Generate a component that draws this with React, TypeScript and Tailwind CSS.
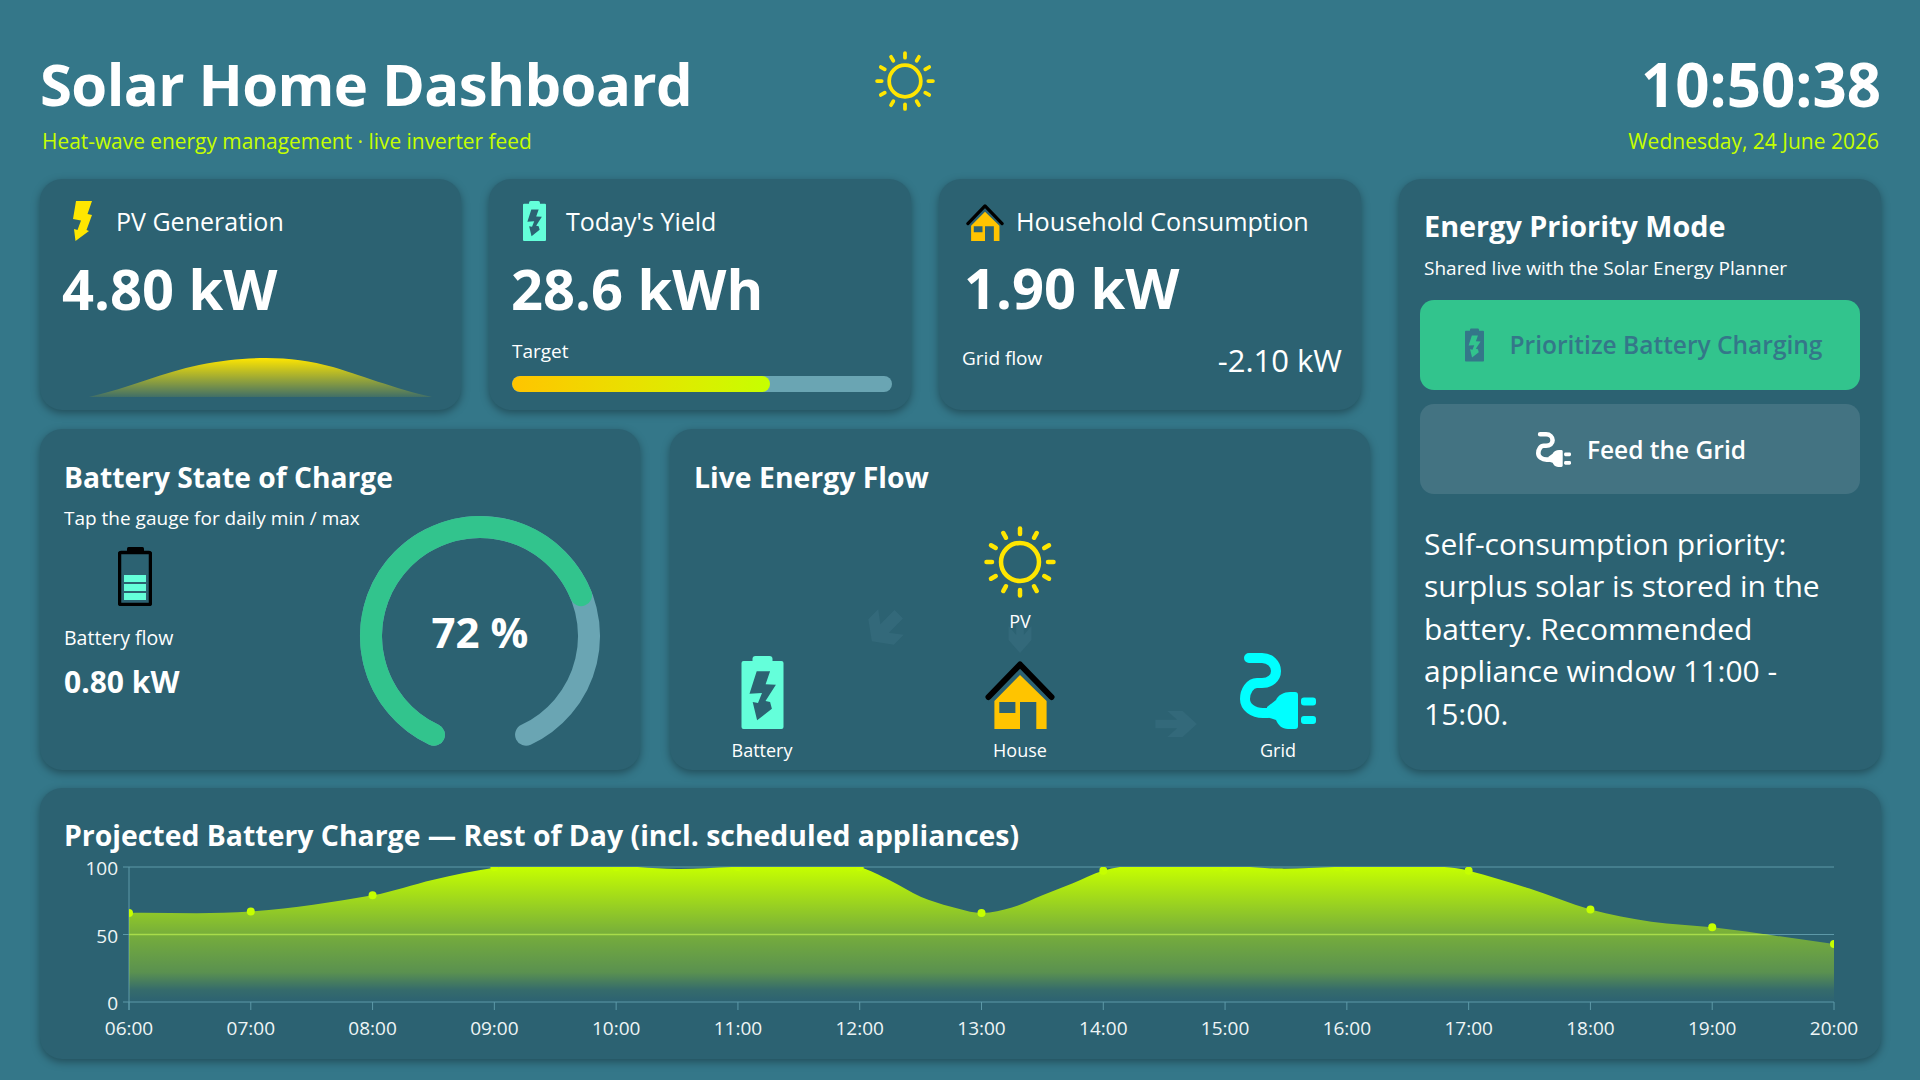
import React from "react";

const hours = Array.from({ length: 15 }, (_, i) => 6 + i);
const dots = [66, 67, 79, 100, 100, 100, 100, 66, 97.3, 100, 100, 97.3, 68.5, 55.3, 43];
// Extra knots keep the plateau dips and the overshoot of the smoothed line.
const knots: [number, number][] = [
  [6, 66], [7, 67], [8, 79], [8.5, 90.6], [9, 99.5], [9.5, 103], [10, 101], [10.5, 98.5], [10.95, 100],
  [11.4, 101], [11.75, 100.6], [12, 99.8], [12.25, 90], [12.5, 78], [12.75, 70.6], [13, 66], [13.25, 70], [13.5, 79],
  [13.75, 88], [14, 97.3], [14.25, 101], [15, 101], [15.45, 98.8], [15.9, 100], [16.4, 101], [16.8, 100], [17, 97.3],
  [17.5, 84], [18, 68.5], [18.5, 59.5], [19, 55.3], [20, 43],
];

const X0 = 89;
const X1 = 1794;
const Y0 = 149;
const Y100 = 14;
const px = (h: number) => X0 + ((h - 6) * (X1 - X0)) / 14;
const py = (v: number) => Y0 - (v * (Y0 - Y100)) / 100;

function linePath() {
  const slope = (i: number) => {
    const a = knots[Math.max(0, i - 1)];
    const b = knots[Math.min(knots.length - 1, i + 1)];
    return (b[1] - a[1]) / (b[0] - a[0]);
  };
  let d = `M${px(knots[0][0])} ${py(knots[0][1])}`;
  for (let i = 0; i < knots.length - 1; i++) {
    const [h0, v0] = knots[i];
    const [h1, v1] = knots[i + 1];
    const dt = (h1 - h0) / 3;
    d += ` C${px(h0 + dt)} ${py(v0 + slope(i) * dt)} ${px(h1 - dt)} ${py(v1 - slope(i + 1) * dt)} ${px(h1)} ${py(v1)}`;
  }
  return d;
}

const areaPath = `${linePath()} L${X1} ${Y0} L${X0} ${Y0} Z`;

function Sun({ size, color = "#ffe600" }: { size: number; color?: string }) {
  return (
    <svg width={size} height={size} viewBox="0 0 72 72" className="block">
      <circle cx="36" cy="36" r="19" fill="none" stroke={color} strokeWidth="4.5" />
      {Array.from({ length: 12 }, (_, i) => (
        <line
          key={i}
          x1="36"
          y1="2.5"
          x2="36"
          y2="8"
          stroke={color}
          strokeWidth="4.5"
          strokeLinecap="round"
          transform={`rotate(${i * 30} 36 36)`}
        />
      ))}
    </svg>
  );
}

function Bolt() {
  return (
    <svg width="21" height="40" viewBox="0 0 21 40" className="block">
      <path d="M3 0H19L14.5 13L19 14L13.5 29L16 30L2.5 40L1 28L4.5 29L8 19.5L0 18Z" fill="#ffe600" />
    </svg>
  );
}

function ChargeBattery({ width, height, color }: { width: number; height: number; color: string }) {
  return (
    <svg width={width} height={height} viewBox="0 0 42 73" className="block">
      <rect x="11" y="0" width="20" height="8" rx="3" fill={color} />
      <path
        fillRule="evenodd"
        fill={color}
        d="M2 5H40Q42 5 42 7V71Q42 73 40 73H2Q0 73 0 71V7Q0 5 2 5ZM15.2 15.3L8 37.7L20.5 37L16.5 47L11.2 46L15.6 64.3L30.4 52.7L28.6 46L24 45L34.4 28.7L24.1 28.3L28.6 15.3Z"
      />
    </svg>
  );
}

function House({ width, height }: { width: number; height: number }) {
  return (
    <svg width={width} height={height} viewBox="0 0 70 68" className="block">
      <path
        fillRule="evenodd"
        fill="#ffc400"
        d="M35 14L61.6 40V68H51.3V41H35V68H9.4V40ZM14.3 41V52H30.4V41Z"
      />
      <path d="M3.5 36L35 3.5L66.5 36" fill="none" stroke="#000" strokeWidth="6" strokeLinecap="round" strokeLinejoin="round" />
    </svg>
  );
}

function Plug({ size, color }: { size: number; color: string }) {
  return (
    <svg width={size} height={size} viewBox="0 0 76 76" className="block">
      <path
        d="M9 5H22C30 5 36 11 36 18C36 25 30 30 22 30H17C10 30 5 38 5 46C5 54 13 60 23 60H28"
        fill="none"
        stroke={color}
        strokeWidth="10"
        strokeLinecap="round"
      />
      <path d="M27 54L36 47C38 42 44 39 50 39H55Q58 39 58 42V73Q58 76 55 76H48C42 76 38 72 36 67L27 64Z" fill={color} />
      <rect x="61" y="44.5" width="15" height="8" rx="3" fill={color} />
      <rect x="61" y="63" width="15" height="8" rx="3" fill={color} />
    </svg>
  );
}

function LevelBattery() {
  return (
    <svg width="34" height="59" viewBox="0 0 34 59" className="block">
      <rect x="9" y="0" width="17" height="6" rx="1.5" fill="#000" />
      <rect x="1.5" y="5.5" width="31" height="52" rx="1.5" fill="none" stroke="#000" strokeWidth="3.5" />
      <rect x="6" y="28" width="22" height="7" fill="#64ffda" />
      <rect x="6" y="37" width="22" height="7" fill="#64ffda" />
      <rect x="6" y="46" width="22" height="7" fill="#64ffda" />
    </svg>
  );
}

function Gauge() {
  const r = 109;
  const c = 120;
  const pt = (deg: number) => {
    const a = (deg * Math.PI) / 180;
    return `${c + r * Math.sin(a)} ${c - r * Math.cos(a)}`;
  };
  const arc = (from: number, to: number) => `M${pt(from)} A${r} ${r} 0 ${to - from > 180 ? 1 : 0} 1 ${pt(to)}`;
  return (
    <div className="relative w-[240px] h-[240px]">
      <svg width="240" height="240" viewBox="0 0 240 240" className="block overflow-visible">
        <path d={arc(205, 515)} fill="none" stroke="#6aa5b3" strokeWidth="22" strokeLinecap="round" />
        <path d={arc(205, 428)} fill="none" stroke="#32c48d" strokeWidth="22" strokeLinecap="round" />
      </svg>
      <div className="absolute inset-0 flex items-center justify-center pb-2 text-[42px] font-bold leading-none">72 %</div>
    </div>
  );
}

function FlowNode({ label, left, top, children }: { label: string; left: number; top: number; children: React.ReactNode }) {
  return (
    <div className="absolute flex flex-col items-center w-[120px]" style={{ left, top }}>
      {children}
      <span className="text-[18px] leading-[26px]">{label}</span>
    </div>
  );
}

function Arrow({ left, top, width, height, rotate }: { left: number; top: number; width: number; height: number; rotate: number }) {
  return (
    <svg
      className="absolute"
      style={{ left, top }}
      width={width}
      height={height}
      viewBox="0 0 44 44"
      preserveAspectRatio="none"
    >
      <path
        d="M4 16H24L15 4H29L42 22L29 40H15L24 28H4Z"
        fill="#33697a"
        transform={`rotate(${rotate} 22 22)`}
      />
    </svg>
  );
}

function Card({ className = "", children }: { className?: string; children: React.ReactNode }) {
  return <div className={`rounded-[22px] bg-[#2c6272] shadow-[0_3px_9px_rgba(0,0,0,0.35)] ${className}`}>{children}</div>;
}

export default function App() {
  return (
    <div className="w-[1920px] h-[1080px] overflow-hidden bg-[#347789] pl-10 pr-[39px] pt-12 text-white font-['Open_Sans',sans-serif]">
      {/* header */}
      <header className="flex items-start justify-between h-[131px]">
        <div className="w-[830px]">
          <h1 className="text-[58px] leading-[72px] font-bold tracking-[-0.6px]">Solar Home Dashboard</h1>
          <p className="mt-[7px] text-[20.9px] leading-[28px] text-[#c6ff00] pl-[2px]">Heat-wave energy management · live inverter feed</p>
        </div>
        <div className="mr-auto mt-[3px] ml-[5px]">
          <Sun size={60} />
        </div>
        <div className="text-right">
          <div className="text-[60px] leading-[72px] font-bold">10:50:38</div>
          <p className="mt-[7px] text-[21px] leading-[28px] text-[#c6ff00] pr-[2px]">Wednesday, 24 June 2026</p>
        </div>
      </header>

      <div className="flex gap-[29px] h-[591px]">
        <div className="w-[1330px] flex flex-col gap-[19px]">
          {/* stat cards */}
          <div className="flex w-[1321px] gap-[28px] h-[231px]">
            <Card className="w-[421px] shrink-0 pt-[22px]">
              <div className="flex items-center h-10 pl-[33px] gap-[22px]">
                <Bolt />
                <span className="text-[25px] pt-[2px]">PV Generation</span>
              </div>
              <div className="pl-[22px] mt-[14px] text-[56px] leading-[66px] font-bold">4.80 kW</div>
              <svg width="343" height="40" viewBox="0 0 343 40" className="block ml-[49px] mt-[37px]">
                <defs>
                  <linearGradient id="pv" x1="0" y1="0" x2="0" y2="1">
                    <stop offset="0" stopColor="#ffe600" />
                    <stop offset="1" stopColor="#ffe600" stopOpacity="0.1" />
                  </linearGradient>
                </defs>
                <path d="M0 39C40 30 75 14 110 7C135 2 155 0 177 0C200 0 222 3 244 9C265 15 310 32 343 39Z" fill="url(#pv)" />
              </svg>
            </Card>
            <Card className="w-[422px] shrink-0 pt-[22px] pl-[23px]">
              <div className="flex items-center h-10 pl-[11px] gap-[20px]">
                <ChargeBattery width={23} height={40} color="#64ffda" />
                <span className="text-[25px] pt-[2px]">Today's Yield</span>
              </div>
              <div className="mt-[14px] text-[56px] leading-[66px] font-bold -ml-[1px]">28.6 kWh</div>
              <p className="mt-[17px] text-[19px] leading-[26px]">Target</p>
              <div className="mt-[12px] w-[380px] h-4 rounded-full bg-[#6aa5b3] overflow-hidden">
                <div className="w-[68%] h-full rounded-full bg-gradient-to-r from-[#ffc400] to-[#c6ff00]" />
              </div>
            </Card>
            <Card className="w-[422px] shrink-0 pt-[24px]">
              <div className="flex items-center h-[38px] pl-[27px] gap-[12px]">
                <House width={38} height={37} />
                <span className="text-[25.2px]">Household Consumption</span>
              </div>
              <div className="pl-[25px] mt-[13px] text-[56px] leading-[66px] font-bold">1.90 kW</div>
              <div className="flex items-center justify-between mt-[18px] pl-[23px] pr-[19px]">
                <span className="text-[19px] mb-[3px]">Grid flow</span>
                <span className="text-[31px] leading-[44px]">-2.10 kW</span>
              </div>
            </Card>
          </div>

          <div className="flex gap-[30px] h-[341px]">
            {/* battery */}
            <Card className="w-[600px] pt-[30px] pl-6">
              <h2 className="text-[28.2px] leading-[36px] font-bold">Battery State of Charge</h2>
              <div className="flex mt-[9px]">
                <div className="w-[296px]">
                  <p className="text-[19px] leading-[28px]">Tap the gauge for daily min / max</p>
                  <div className="mt-[15px] ml-[54px]">
                    <LevelBattery />
                  </div>
                  <p className="mt-[18px] text-[19.5px] leading-[28px]">Battery flow</p>
                  <p className="mt-[10px] text-[30px] leading-[40px] font-bold">0.80 kW</p>
                </div>
                <div className="mt-[12px]">
                  <Gauge />
                </div>
              </div>
            </Card>

            {/* flow diagram */}
            <Card className="relative w-[700px] pt-[30px] pl-[24px]">
              <h2 className="text-[28.4px] leading-[36px] font-bold">Live Energy Flow</h2>
              <Arrow left={194} top={176} width={44} height={44} rotate={135} />
              <Arrow left={336} top={182} width={28} height={44} rotate={90} />
              <Arrow left={481} top={279} width={48} height={32} rotate={0} />
              <FlowNode label="PV" left={290} top={97}>
                <Sun size={72} />
                <span className="h-[10px]" />
              </FlowNode>
              <FlowNode label="Battery" left={32} top={227}>
                <ChargeBattery width={43} height={73} color="#64ffda" />
                <span className="h-[8px]" />
              </FlowNode>
              <FlowNode label="House" left={290} top={232}>
                <House width={70} height={68} />
                <span className="h-[8px]" />
              </FlowNode>
              <FlowNode label="Grid" left={548} top={224}>
                <Plug size={76} color="#00ffff" />
                <span className="h-[8px]" />
              </FlowNode>
            </Card>
          </div>
        </div>

        {/* priority panel */}
        <Card className="flex-1 pt-[29px] pl-[21px] pr-[21px]">
          <h2 className="pl-[4px] text-[28.8px] leading-[36px] font-bold">Energy Priority Mode</h2>
          <p className="pl-[4px] mt-[11px] text-[19px] leading-[26px]">Shared live with the Solar Energy Planner</p>
          <button className="mt-[19px] w-full h-[90px] rounded-[14px] bg-[#32c48d] flex items-center justify-center gap-[26px] pl-[7px] text-[#347789] text-[24.5px] font-semibold">
            <ChargeBattery width={19} height={34} color="#347789" />
            <span>Prioritize Battery Charging</span>
          </button>
          <button className="mt-[14px] w-full h-[90px] rounded-[14px] bg-[#437382] flex items-center justify-center gap-[16px] pl-[2px] text-[24.5px] font-semibold">
            <Plug size={35} color="#ffffff" />
            <span className="pt-[3px]">Feed the Grid</span>
          </button>
          <p className="pl-[4px] mt-[29px] text-[30px] leading-[42.4px] font-normal">
            Self-consumption priority: surplus solar is stored in the battery. Recommended appliance window 11:00 - 15:00.
          </p>
        </Card>
      </div>

      {/* projection chart */}
      <Card className="mt-[18px] h-[271px] pt-[29px]">
        <h2 className="pl-6 text-[28.4px] leading-[36px] font-bold">Projected Battery Charge — Rest of Day (incl. scheduled appliances)</h2>
        <svg width="1841" height="206" viewBox="0 0 1841 206" className="block">
          <defs>
            <linearGradient id="soc" gradientUnits="userSpaceOnUse" x1="0" y1={Y100} x2="0" y2={Y0}>
              <stop offset="0" stopColor="#c6ff00" />
              <stop offset="0.5" stopColor="#c6ff00" stopOpacity="0.48" />
              <stop offset="0.78" stopColor="#c6ff00" stopOpacity="0.3" />
              <stop offset="0.91" stopColor="#c6ff00" stopOpacity="0.06" />
              <stop offset="1" stopColor="#c6ff00" stopOpacity="0" />
            </linearGradient>
            <clipPath id="plot">
              <rect x={X0} y={Y100} width={X1 - X0} height={Y0 - Y100} />
            </clipPath>
            <clipPath id="area">
              <path d={areaPath} />
            </clipPath>
          </defs>
          {[0, 50, 100].map((v) => (
            <g key={v}>
              <line x1={X0 - 6} x2={X1} y1={py(v)} y2={py(v)} stroke="#5d99a8" strokeWidth="1" />
              <text x="78" y={py(v) + 8} textAnchor="end" fill="#eef5f6" fontSize="19">
                {v}
              </text>
            </g>
          ))}
          <line x1={X0} x2={X0} y1={Y100} y2={Y0 + 8} stroke="#5d99a8" />
          <g clipPath="url(#plot)">
            <path d={areaPath} fill="url(#soc)" />
            <line x1={X0} x2={X1} y1={py(50)} y2={py(50)} stroke="#a8dc4a" strokeWidth="1.5" clipPath="url(#area)" />
            {dots.map((v, i) => (
              <circle key={i} cx={px(6 + i)} cy={py(v)} r="4" fill="#c6ff00" />
            ))}
          </g>
          {hours.map((h) => (
            <g key={h}>
              <line x1={px(h)} x2={px(h)} y1={Y0} y2={Y0 + 8} stroke="#5d99a8" />
              <text x={px(h)} y={182} textAnchor="middle" fill="#eef5f6" fontSize="19">
                {`${String(h).padStart(2, "0")}:00`}
              </text>
            </g>
          ))}
        </svg>
      </Card>
    </div>
  );
}
